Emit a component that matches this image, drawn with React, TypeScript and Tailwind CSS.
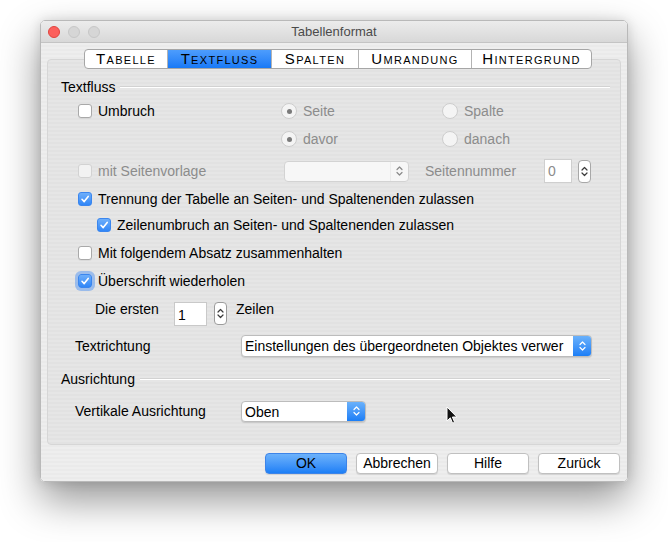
import type { ReactNode } from 'react';

const stripes =
  'bg-[repeating-linear-gradient(180deg,#eeeeee_0px,#eeeeee_2px,#eaeaea_2px,#eaeaea_4px)]';

function Chevrons({ color = '#ffffff', w = 7, h = 12 }: { color?: string; w?: number; h?: number }) {
  return (
    <svg width={w} height={h} viewBox="0 0 7 12" fill="none">
      <path d="M1 4.5 L3.5 2 L6 4.5" stroke={color} strokeWidth="1.2" strokeLinecap="round" strokeLinejoin="round" />
      <path d="M1 7.5 L3.5 10 L6 7.5" stroke={color} strokeWidth="1.2" strokeLinecap="round" strokeLinejoin="round" />
    </svg>
  );
}

function CheckBox({ checked = false, disabled = false, focus = false }: { checked?: boolean; disabled?: boolean; focus?: boolean }) {
  if (checked) {
    return (
      <span
        className={`flex h-[14px] w-[14px] shrink-0 items-center justify-center rounded-[3px] border border-[#3b86ee] bg-gradient-to-b from-[#6daefa] to-[#2f86f7] ${
          focus ? 'shadow-[0_0_0_3px_rgba(95,155,240,0.55)]' : ''
        }`}
      >
        <svg width="10" height="10" viewBox="0 0 10 10" fill="none">
          <path d="M2 5.3 L4.2 7.6 L8.2 2.4" stroke="#ffffff" strokeWidth="1.6" strokeLinecap="round" strokeLinejoin="round" />
        </svg>
      </span>
    );
  }
  return (
    <span
      className={`h-[14px] w-[14px] shrink-0 rounded-[3px] border ${
        disabled ? 'border-[#d2d2d2] bg-[#f2f2f2]' : 'border-[#a9a9a9] bg-white shadow-[0_1px_0_rgba(0,0,0,0.05)]'
      }`}
    />
  );
}

function Radio({ checked = false }: { checked?: boolean }) {
  return (
    <span className="flex h-[16px] w-[16px] shrink-0 items-center justify-center rounded-full border border-[#cdcdcd] bg-[#f4f4f4]">
      {checked && <span className="h-[5px] w-[5px] rounded-full bg-[#7a7a7a]" />}
    </span>
  );
}

function Stepper({ className = '' }: { className?: string }) {
  return (
    <span className={`flex h-[23px] w-[13px] shrink-0 items-center justify-center rounded-[4px] border border-[#9c9c9c] bg-white ${className}`}>
      <Chevrons color="#3a3a3a" w={7} h={13} />
    </span>
  );
}

function Select({ text, className }: { text: string; className: string }) {
  return (
    <div className={`flex overflow-hidden rounded-[4px] border border-[#bcbcbc] bg-white shadow-[0_1px_1px_rgba(0,0,0,0.12)] ${className}`}>
      <span className="flex-1 overflow-hidden whitespace-nowrap pl-[3px] leading-[20px] text-black">{text}</span>
      <span className="flex w-[18px] shrink-0 items-center justify-center bg-gradient-to-b from-[#69b1fb] to-[#1a7ef6]">
        <Chevrons />
      </span>
    </div>
  );
}

function SectionHead({ title }: { title: string }) {
  return (
    <div className="flex h-[20px] items-center pl-[13px] pr-[10px]">
      <span className="text-black">{title}</span>
      <span className="ml-[5px] h-[2px] flex-1 border-t border-b border-t-[#d2d2d2] border-b-white" />
    </div>
  );
}

function CheckRow({ label, className, checked, focus }: { label: string; className: string; checked?: boolean; focus?: boolean }) {
  return (
    <div className={`flex h-[20px] items-center ${className}`}>
      <CheckBox checked={checked} focus={focus} />
      <span className="ml-[6px] text-black">{label}</span>
    </div>
  );
}

function Button({ children, primary = false }: { children: ReactNode; primary?: boolean }) {
  return (
    <button
      type="button"
      className={`flex h-[21px] w-[82px] items-center justify-center rounded-[4px] border text-[14px] text-black shadow-[0_1px_1px_rgba(0,0,0,0.1)] ${
        primary ? 'border-[#3d84e8] bg-gradient-to-b from-[#6cb2fb] to-[#1b7ff6]' : 'border-[#c0c0c0] bg-white'
      }`}
    >
      {children}
    </button>
  );
}

const tabs = ['Tabelle', 'Textfluss', 'Spalten', 'Umrandung', 'Hintergrund'];
const tabWidths = ['w-[82px]', 'w-[104px]', 'w-[87px]', 'w-[113px]', 'w-[120px]'];

export default function App() {
  return (
    <div className="relative h-[542px] w-[668px] overflow-hidden bg-white pl-[40px] pt-[20px] font-['Liberation_Sans',Arial,sans-serif] text-[14px]">
      <div className="flex h-[462px] w-[588px] flex-col overflow-hidden rounded-[5px] border border-[#b9b9b9] shadow-[0_18px_40px_rgba(0,0,0,0.42),0_0_12px_rgba(0,0,0,0.12)]">
        {/* title bar */}
        <div className="grid h-[22px] shrink-0 grid-cols-[1fr_auto_1fr] items-center border-b border-[#c4c4c4] bg-gradient-to-b from-[#ececec] to-[#d8d8d8]">
          <div className="flex items-center gap-[8px] pl-[7px]">
            <span className="h-[12px] w-[12px] rounded-full border border-[#e0443e] bg-[#fc605c]" />
            <span className="h-[12px] w-[12px] rounded-full border border-[#c7c7c7] bg-[#d6d6d6]" />
            <span className="h-[12px] w-[12px] rounded-full border border-[#c7c7c7] bg-[#d6d6d6]" />
          </div>
          <span className="text-[13px] text-[#4b4b4b]">Tabellenformat</span>
          <div />
        </div>

        {/* body */}
        <div className={`flex flex-1 flex-col px-[6px] pt-[6px] ${stripes}`}>
          <div className="relative z-10 ml-[37px] flex h-[20px] self-start overflow-hidden rounded-[4px] border border-[#a6a6a6] bg-white">
            {tabs.map((t, i) => (
              <span
                key={t}
                className={`flex h-full items-center justify-center tracking-[1.3px] text-[15px] text-black [font-variant-caps:small-caps] ${tabWidths[i]} ${
                  i > 0 ? 'border-l border-[#b3b3b3]' : ''
                } ${i === 1 ? 'bg-gradient-to-b from-[#4d9dfd] to-[#1779f6]' : ''}`}
              >
                {t}
              </span>
            ))}
          </div>

          <div className="-mt-[10px] flex h-[386px] flex-col rounded-[4px] border border-[#d6d6d6] bg-[repeating-linear-gradient(180deg,#e6e6e6_0px,#e6e6e6_2px,#e2e2e2_2px,#e2e2e2_4px)] pt-[17px]">
            <SectionHead title="Textfluss" />

            <div className="mt-[4px] flex h-[20px] items-center pl-[30px]">
              <div className="flex w-[203px] items-center">
                <CheckBox />
                <span className="ml-[6px] text-black">Umbruch</span>
              </div>
              <div className="flex w-[161px] items-center text-[#8c8c8c]">
                <Radio checked />
                <span className="ml-[6px]">Seite</span>
              </div>
              <div className="flex items-center text-[#8c8c8c]">
                <Radio />
                <span className="ml-[6px]">Spalte</span>
              </div>
            </div>

            <div className="mt-[8px] flex h-[20px] items-center pl-[233px]">
              <div className="flex w-[161px] items-center text-[#8c8c8c]">
                <Radio checked />
                <span className="ml-[6px]">davor</span>
              </div>
              <div className="flex items-center text-[#8c8c8c]">
                <Radio />
                <span className="ml-[6px]">danach</span>
              </div>
            </div>

            <div className="mt-[10px] flex h-[24px] items-center pl-[30px]">
              <div className="flex w-[206px] items-center">
                <CheckBox disabled />
                <span className="ml-[6px] text-[#8c8c8c]">mit Seitenvorlage</span>
              </div>
              <div className="flex h-[21px] w-[125px] overflow-hidden rounded-[4px] border border-[#d3d3d3] bg-[#f7f7f7]">
                <span className="flex-1" />
                <span className="flex w-[18px] items-center justify-center border-l border-[#ececec]">
                  <Chevrons color="#8a8a8a" />
                </span>
              </div>
              <span className="ml-[16px] w-[119px] text-[#8c8c8c]">Seitennummer</span>
              <span className="flex h-[24px] w-[28px] items-center border border-[#cfcfcf] bg-white pl-[3px] text-[#8c8c8c]">0</span>
              <Stepper className="ml-[6px] border-[#a8a8a8]" />
            </div>

            <CheckRow className="mt-[6px] pl-[30px]" checked label="Trennung der Tabelle an Seiten- und Spaltenenden zulassen" />
            <CheckRow className="mt-[6px] pl-[49px]" checked label="Zeilenumbruch an Seiten- und Spaltenenden zulassen" />
            <CheckRow className="mt-[8px] pl-[30px]" label="Mit folgendem Absatz zusammenhalten" />
            <CheckRow className="mt-[8px] pl-[30px]" checked focus label="Überschrift wiederholen" />

            <div className="mt-[8px] flex h-[28px] items-start pl-[47px]">
              <span className="w-[79px] leading-[20px] text-black">Die ersten</span>
              <span className="mt-[3px] flex h-[24px] w-[33px] items-center border border-[#c9c9c9] bg-white pl-[3px] pt-[3px] text-black">1</span>
              <Stepper className="ml-[7px] mt-[3px]" />
              <span className="ml-[9px] leading-[20px] text-black">Zeilen</span>
            </div>

            <div className="mt-[8px] flex h-[22px] items-center pl-[27px]">
              <span className="w-[166px] text-black">Textrichtung</span>
              <Select className="h-[22px] w-[351px]" text="Einstellungen des übergeordneten Objektes verwer" />
            </div>

            <div className="mt-[12px]">
              <SectionHead title="Ausrichtung" />
            </div>

            <div className="mt-[11px] flex h-[22px] items-center pl-[27px]">
              <span className="w-[166px] text-black">Vertikale Ausrichtung</span>
              <Select className="h-[21px] w-[125px]" text="Oben" />
            </div>
          </div>

          <div className="mr-[1px] mt-[8px] flex justify-end gap-[9px]">
            <Button primary>OK</Button>
            <Button>Abbrechen</Button>
            <Button>Hilfe</Button>
            <Button>Zurück</Button>
          </div>
        </div>
      </div>

      {/* mouse pointer */}
      <svg className="absolute left-[446px] top-[406px]" width="12" height="19" viewBox="0 0 12 19">
        <path d="M1 1 L1 15 L4.3 11.8 L6.6 17.2 L8.6 16.3 L6.4 11 L10.8 11 Z" fill="#111111" stroke="#ffffff" strokeWidth="1" strokeLinejoin="round" />
      </svg>
    </div>
  );
}
